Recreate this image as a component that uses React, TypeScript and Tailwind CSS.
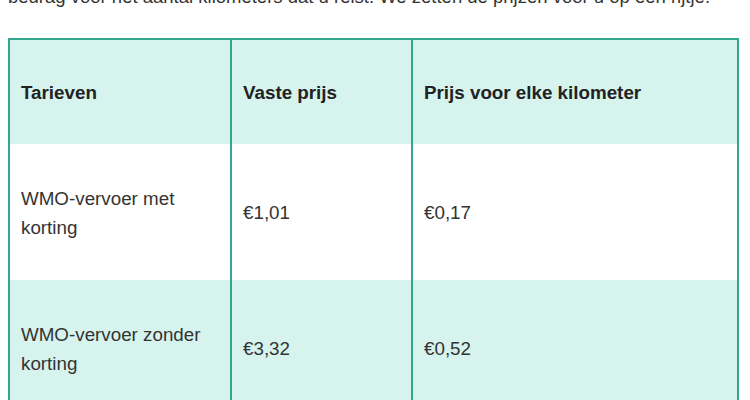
export default function App() {
  const cell = "border-x-2 border-[#33a78d] px-[11px] align-middle text-left";
  return (
    <div className="w-[750px] h-[400px] overflow-hidden bg-white text-[#333] text-[18.8px] leading-[28.5px]" style={{ fontFamily: '"Liberation Sans", Arial, sans-serif' }}>
      <p className="mt-[-17px] pl-2 whitespace-nowrap text-[18.5px]">
        bedrag voor het aantal kilometers dat u reist. We zetten de prijzen voor u op een rijtje.
      </p>
      <table className="ml-2 mt-[26px] w-[731px] border-collapse border-2 border-[#33a78d]">
        <colgroup>
          <col className="w-[222px]" />
          <col className="w-[181px]" />
          <col />
        </colgroup>
        <thead>
          <tr className="bg-[#d6f3ed] text-[#222]">
            <th className={`${cell} pt-[39px] pb-[37px] font-bold`}>Tarieven</th>
            <th className={`${cell} pt-[39px] pb-[37px] font-bold`}>Vaste prijs</th>
            <th className={`${cell} pt-[39px] pb-[37px] font-bold`}>Prijs voor elke kilometer</th>
          </tr>
        </thead>
        <tbody>
          <tr className="bg-white">
            <td className={`${cell} pt-[41px] pb-[38px]`}>WMO-vervoer met korting</td>
            <td className={`${cell} pt-[41px] pb-[38px]`}>€1,01</td>
            <td className={`${cell} pt-[41px] pb-[38px]`}>€0,17</td>
          </tr>
          <tr className="bg-[#d6f3ed]">
            <td className={`${cell} pt-[41px] pb-[38px]`}>WMO-vervoer zonder korting</td>
            <td className={`${cell} pt-[41px] pb-[38px]`}>€3,32</td>
            <td className={`${cell} pt-[41px] pb-[38px]`}>€0,52</td>
          </tr>
        </tbody>
      </table>
    </div>
  );
}
